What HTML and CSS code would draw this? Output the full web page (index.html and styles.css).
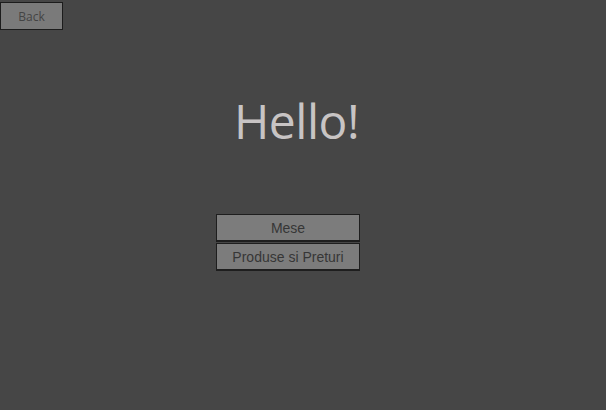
FILE: index.html
```html
<!DOCTYPE html>
<html>
<head>
<meta charset="utf-8">
<link rel="stylesheet" href="styles.css">
</head>
<body>
<div class="page">
  <div class="topbar"><button class="back">Back</button></div>
  <h1 class="title">Hello!</h1>
  <div class="menu">
    <button class="menu-btn">Mese</button>
    <button class="menu-btn">Produse si Preturi</button>
  </div>
</div>
</body>
</html>
```
FILE: styles.css
```css
html, body {
  margin: 0;
  padding: 0;
  background: #464646;
  width: 606px;
  height: 410px;
  overflow: hidden;
}
.page {
  display: flex;
  flex-direction: column;
  height: 410px;
}
.topbar {
  padding-top: 2px;
  height: 27px;
}
.back {
  display: block;
  width: 63px;
  height: 28px;
  margin: 0;
  padding: 0;
  background: #7a7a7a;
  border: 1px solid #1c1c1c;
  color: #444444;
  font-family: "Open Sans", "DejaVu Sans", sans-serif;
  font-size: 12px;
}
.title {
  margin: 62px 0 0 0;
  height: 60px;
  text-align: center;
  font-family: "Open Sans", "Noto Sans", sans-serif;
  font-weight: 400;
  font-size: 48px;
  line-height: 60px;
  color: #c8c4c4;
  letter-spacing: -0.5px;
  padding-right: 13px;
}
.menu {
  margin: 63px 0 0 216px;
  display: flex;
  flex-direction: column;
  width: 144px;
  gap: 1px;
}
.menu-btn {
  height: 28px;
  margin: 0;
  padding: 0;
  background: #7c7c7c;
  border: 1px solid #1e1e1e;
  border-bottom-width: 2px;
  color: #363636;
  font-family: "Liberation Sans", Arial, sans-serif;
  font-size: 14px;
}
```
